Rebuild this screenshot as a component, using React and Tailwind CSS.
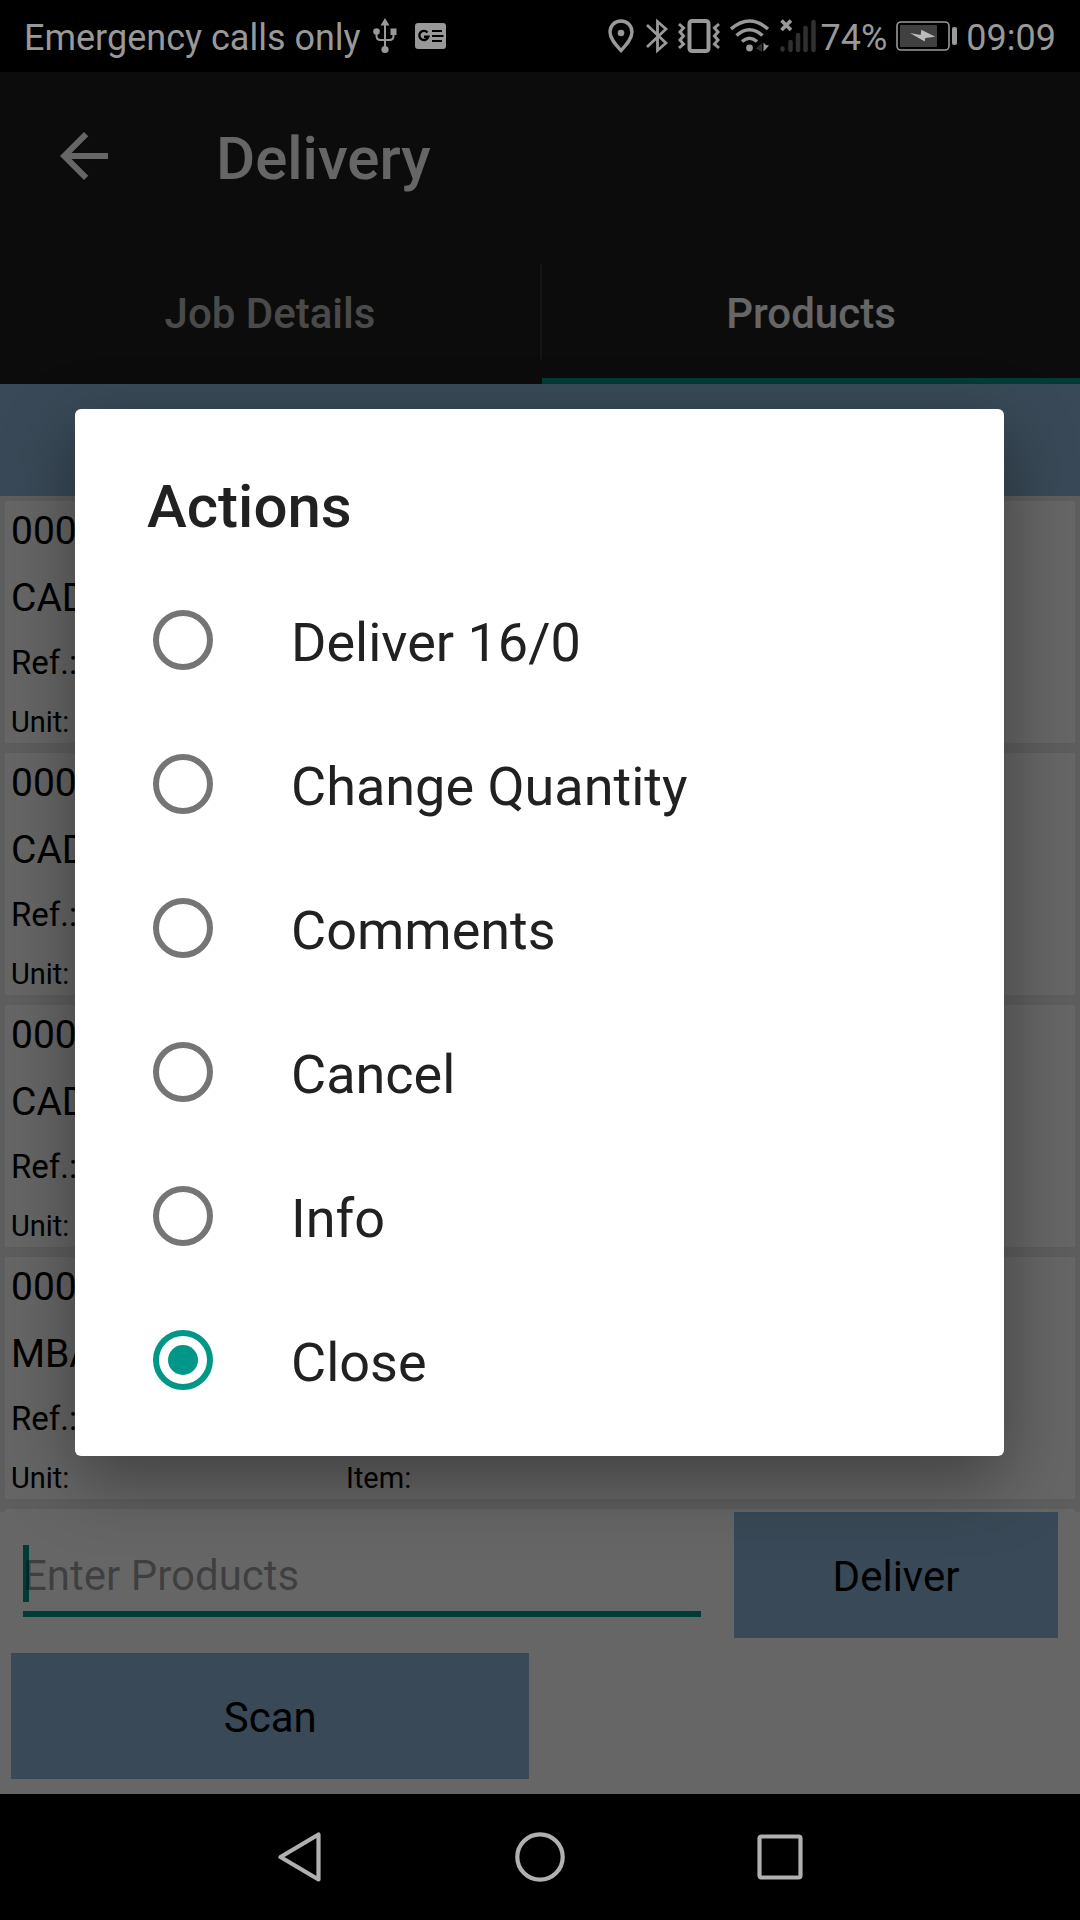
import { useState } from 'react';
import { MdArrowBack } from 'react-icons/md';

const actions = ['Deliver 16/0', 'Change Quantity', 'Comments', 'Cancel', 'Info', 'Close'];

const products = [
  { id: 1, code: '000', name: 'CAD' },
  { id: 2, code: '000', name: 'CAD' },
  { id: 3, code: '000', name: 'CAD' },
  { id: 4, code: '000', name: 'MBA', hasItem: true },
];

const UsbIcon = () => (
  <svg width="24" height="36" viewBox="0 0 24 36" fill="none" stroke="currentColor" strokeWidth="2">
    <path d="M12 6v25M3.500 14v4q0 4 4 4h9q4 0 4-4v-4" />
    <path d="M12 0l4.500 7.500h-9zM17.500 10.500h6v6.500h-6z" fill="currentColor" stroke="none" />
    <circle cx="3.500" cy="13.500" r="3.300" fill="currentColor" stroke="none" />
    <circle cx="12" cy="31.500" r="3.600" fill="currentColor" stroke="none" />
  </svg>
);

const NewsIcon = () => (
  <svg width="31" height="26" viewBox="0 0 31 26" fill="none">
    <rect width="31" height="26" rx="3" fill="currentColor" />
    <path d="M12.500 9.500a4.600 4.600 0 1 0 .9 4.200H9" stroke="#000" strokeWidth="2.400" />
    <path d="M17 8h10M17 13h11.500M17 18h10" stroke="#000" strokeWidth="2.200" />
  </svg>
);

const LocationIcon = () => (
  <svg width="28" height="34" viewBox="0 0 28 34">
    <path
      d="M13 2C6.500 2 2 7 2 13c0 7 6 13 11 18.500C18 26 24 20 24 13 24 7 19.500 2 13 2z"
      fill="none"
      stroke="currentColor"
      strokeWidth="3.400"
    />
    <circle cx="13" cy="14" r="3.300" fill="currentColor" />
  </svg>
);

const BluetoothIcon = () => (
  <svg width="22" height="36" viewBox="0 0 22 36" fill="none" stroke="currentColor" strokeWidth="2.800">
    <path d="M1 7l19 18-8.500 7.500v-29L20 11 1 29" />
  </svg>
);

const VibrateIcon = () => (
  <svg width="42" height="34" viewBox="0 0 42 34" fill="none" stroke="currentColor" strokeWidth="3">
    <rect x="11.500" y="2" width="19" height="30" rx="2.500" strokeWidth="4" />
    <path d="M1 5l4.500 4L2 13l3.500 4L2 21l3.500 4L1 29M41 5l-4.500 4 3.500 4-3.500 4 3.500 4-3.500 4 4.500 4" />
  </svg>
);

const WifiIcon = () => (
  <svg width="40" height="34" viewBox="0 0 40 34" fill="none" stroke="currentColor" strokeWidth="3.400">
    <path d="M1 10q18.500-16 37 0M6.500 16.500q13-11.500 26 0M12 22.500q7.500-6.500 15 0" />
    <circle cx="19.500" cy="29" r="3.400" fill="currentColor" stroke="none" />
    <path d="M26 29.500l6-5.500v9z" fill="#303030" stroke="none" />
    <path d="M33.500 23.500v9l2.500-2.500 3-3.500-3-.5z" fill="currentColor" stroke="none" />
  </svg>
);

const SignalIcon = () => (
  <svg width="36" height="34" viewBox="0 0 36 34" fill="none" strokeLinecap="round">
    <path d="M1.500 1.500l9.500 9.500M11 1.500L1.500 11" stroke="currentColor" strokeWidth="3.600" strokeLinecap="butt" />
    <path d="M2.500 29.500v1M10.500 23v8M18 16v15M25.500 9v22M33.500 3v28" stroke="#303030" strokeWidth="4.500" />
  </svg>
);

const BatteryIcon = () => (
  <svg width="61" height="30" viewBox="0 0 61 30" fill="none">
    <rect x="1" y="1" width="52" height="28" rx="4" stroke="currentColor" strokeWidth="1.600" />
    <rect x="4" y="4" width="37" height="22" rx="1" fill="#404040" />
    <path d="M14 12l10.700 2 .6-5.300 14 7-10 1.300-.6 3.500z" fill="#bbb" />
    <rect x="56" y="6" width="5" height="18" rx="2" fill="currentColor" />
  </svg>
);

const StatusBar = () => (
  <div className="flex h-[72px] shrink-0 items-center bg-black px-6 text-[36px] leading-[42px] text-[#999999]">
    <span className="pt-1">Emergency calls only</span>
    <div className="ml-3 flex items-center gap-[18px]">
      <UsbIcon />
      <NewsIcon />
    </div>
    <div className="ml-auto flex items-center gap-[10px]">
      <LocationIcon />
      <BluetoothIcon />
      <VibrateIcon />
      <WifiIcon />
      <SignalIcon />
    </div>
    <span className="ml-[5px] pt-1">74%</span>
    <div className="mx-[9px]">
      <BatteryIcon />
    </div>
    <span className="pt-1">09:09</span>
  </div>
);

const Header = () => (
  <header className="shrink-0 bg-[#202020] font-medium text-white">
    <div className="flex h-[168px] items-center px-12">
      <button type="button" aria-label="Back">
        <MdArrowBack size={72} />
      </button>
      <h1 className="ml-24 pt-[6px] text-[60px] leading-[72px]">Delivery</h1>
    </div>
    <div className="flex h-36 text-[42px]">
      <button type="button" className="w-1/2 pt-[2px] font-medium text-white/70">
        Job Details
      </button>
      <div className="my-6 w-[2px] bg-white/10" />
      <button type="button" className="flex-1 border-b-6 border-[#009688] pt-2 font-medium">
        Products
      </button>
    </div>
  </header>
);

const ProductCard = ({ product }) => (
  <li className="shrink-0 bg-white px-[6px] pt-[3px] text-black">
    <p className="text-[39px] leading-[54px]">{product.code}</p>
    <p className="mt-[13px] text-[39px] leading-[54px]">{product.name}</p>
    <p className="mt-[14px] text-[33px] leading-[48px]">Ref.:</p>
    <div className="mt-[14px] flex text-[29px] leading-[42px]">
      <span className="w-[335px]">Unit:</span>
      {product.hasItem && <span>Item:</span>}
    </div>
  </li>
);

const ProductForm = () => (
  <form className="shrink-0 bg-white pb-[15px] text-[42px] text-black">
    <div className="flex items-start gap-[33px] pr-[22px] pl-[23px]">
      <div className="relative mt-[30px] min-w-0 flex-1">
        <span className="absolute top-[3px] left-0 h-[57px] w-[6px] bg-[#009688]" />
        <input
          type="text"
          aria-label="Enter Products"
          placeholder="Enter Products"
          className="relative block h-[75px] w-full border-b-6 border-[#009688] bg-transparent pb-[2px] outline-none placeholder:text-black/38"
        />
      </div>
      <button type="button" className="h-[126px] w-[324px] bg-[#8fb7da] pt-[2px]">
        Deliver
      </button>
    </div>
    <div className="mt-[15px] px-[11px]">
      <button type="button" className="h-[126px] w-[49%] bg-[#8fb7da] pt-[2px]">
        Scan
      </button>
    </div>
  </form>
);

const ActionsDialog = () => {
  const [selected, setSelected] = useState('Close');

  return (
    <div className="absolute inset-0 flex items-center bg-black/60 pr-[76px] pb-[2px] pl-[75px]">
      <div
        role="dialog"
        aria-labelledby="actions-title"
        className="flex-1 rounded-[6px] bg-white pb-6 text-[#212121] shadow-[0_24px_70px_rgba(0,0,0,0.38)]"
      >
        <h2 id="actions-title" className="px-[72px] pt-[58px] pb-[21px] text-[60px] leading-[80px] font-medium">
          Actions
        </h2>
        {actions.map((action) => (
          <label key={action} className="flex h-36 items-center px-[78px]">
            <input
              type="radio"
              name="action"
              value={action}
              checked={selected === action}
              onChange={() => setSelected(action)}
              className="grid size-[60px] shrink-0 appearance-none place-items-center rounded-full border-6 border-[#757575] checked:border-[#009688] checked:before:size-[30px] checked:before:rounded-full checked:before:bg-[#009688]"
            />
            <span className="pt-[6px] pl-[78px] text-[54px] leading-[64px]">{action}</span>
          </label>
        ))}
      </div>
    </div>
  );
};

const NavBar = () => (
  <nav className="flex h-[126px] shrink-0 justify-center bg-black text-[#b0b0b0]">
    <button type="button" aria-label="Back" className="flex w-60 items-center justify-center">
      <svg width="44" height="50" viewBox="0 0 44 50" fill="none" stroke="currentColor" strokeWidth="4.200" strokeLinejoin="round">
        <path d="M2.500 25L40.500 2.500v45z" />
      </svg>
    </button>
    <button type="button" aria-label="Home" className="flex w-60 items-center justify-center">
      <svg width="50" height="50" viewBox="0 0 50 50" fill="none" stroke="currentColor" strokeWidth="4.200">
        <circle cx="25" cy="25" r="22.700" />
      </svg>
    </button>
    <button type="button" aria-label="Recent apps" className="flex w-60 items-center justify-center">
      <svg width="46" height="46" viewBox="0 0 46 46" fill="none" stroke="currentColor" strokeWidth="4.200">
        <rect x="2.500" y="2.500" width="41" height="41" rx="2" />
      </svg>
    </button>
  </nav>
);

const App = () => {
  return (
    <div className="flex h-screen flex-col font-['Roboto',sans-serif]">
      <StatusBar />
      <main className="relative flex min-h-0 flex-1 flex-col overflow-hidden">
        <Header />
        <div className="h-28 shrink-0 bg-[#8fb7da]" />
        <ul className="flex min-h-0 flex-1 flex-col gap-[10px] overflow-hidden bg-[#ebebeb] px-[5px] pt-[5px]">
          {products.map((product) => (
            <ProductCard key={product.id} product={product} />
          ))}
          <li className="flex-1 bg-white" />
        </ul>
        <ProductForm />
        <ActionsDialog />
      </main>
      <NavBar />
    </div>
  );
};

export default App;
